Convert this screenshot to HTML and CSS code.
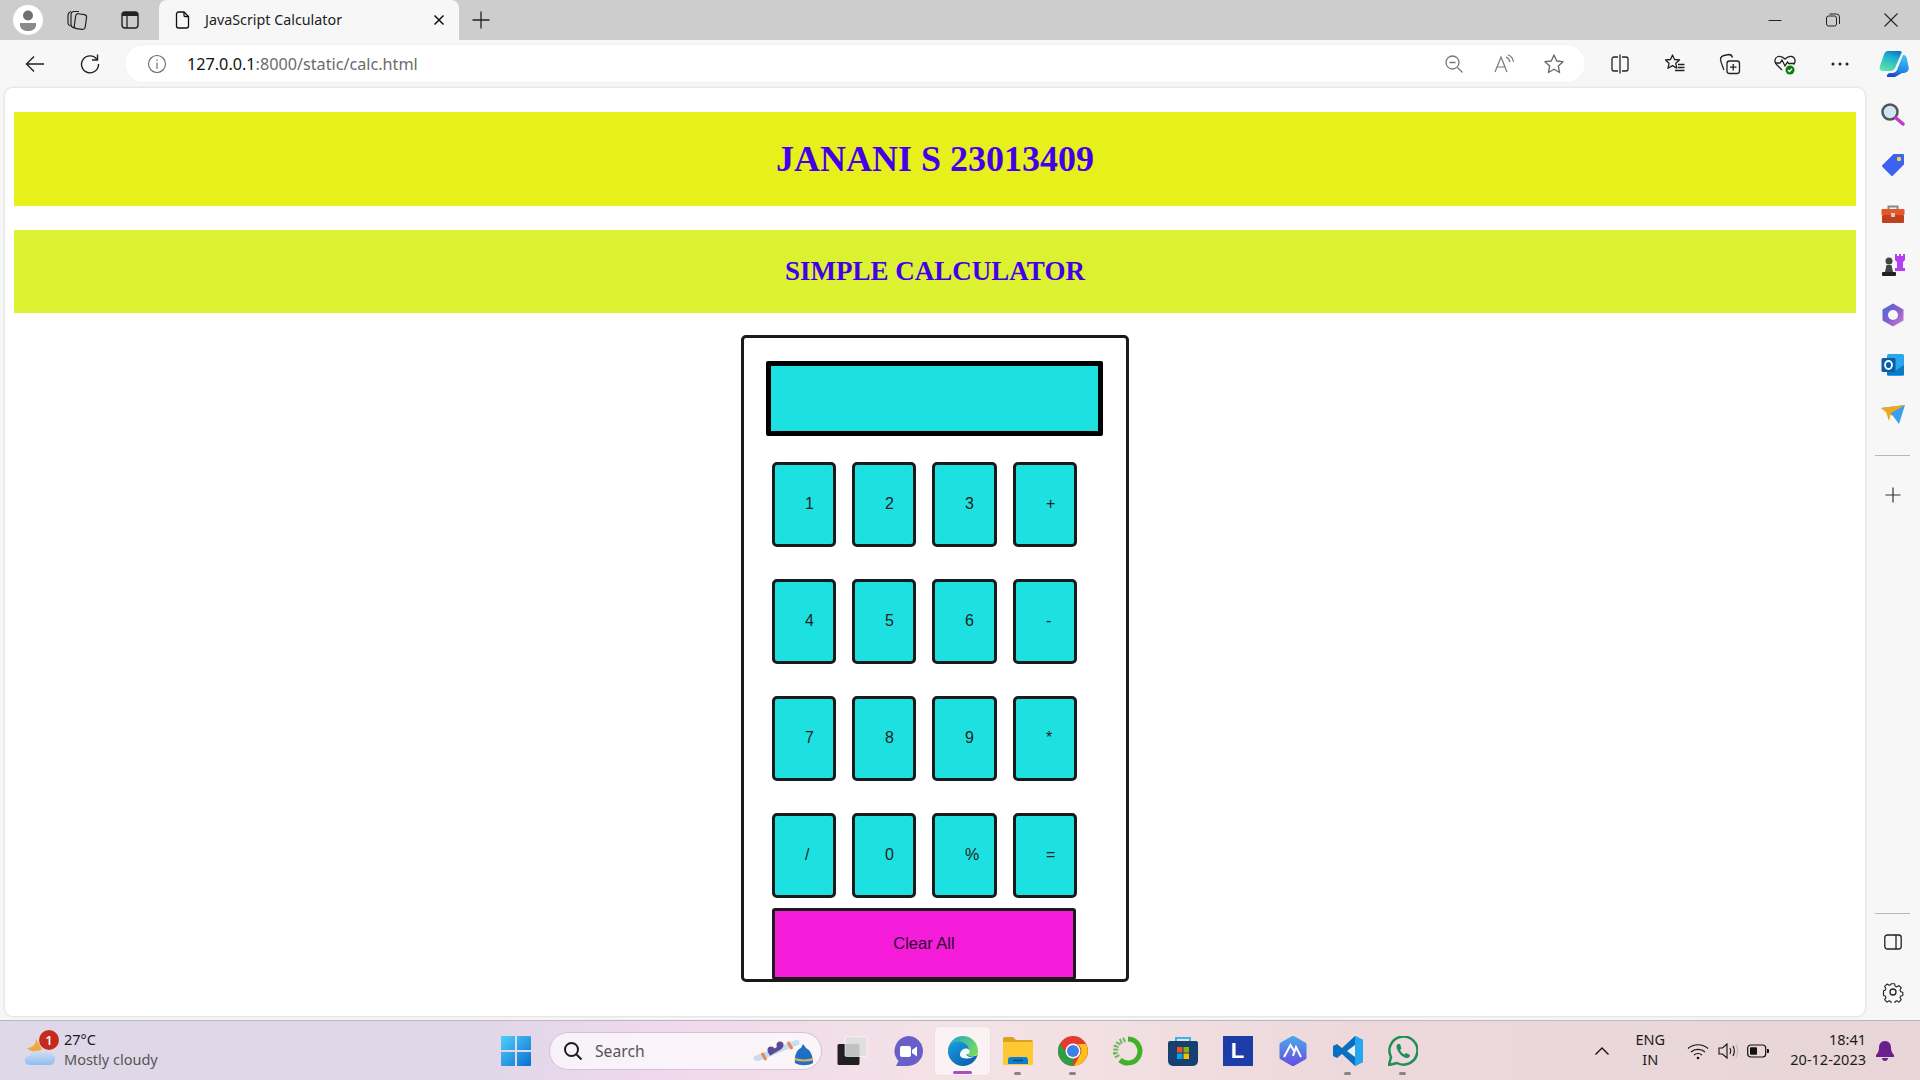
FILE: index.html
```html
<!DOCTYPE html>
<html lang="en">
<head>
  <meta charset="UTF-8" />
  <title>JavaScript Calculator</title>
  <link rel="stylesheet" href="styles.css">
</head>
<body>

  <div class="tabstrip">
    <div class="strip-btn">
      <span class="avatar">
        <svg width="30" height="30" viewBox="0 0 30 30"><circle cx="15" cy="15" r="15" fill="#fff"/><circle cx="15" cy="10.5" r="5" fill="#707070"/><path d="M7 18h16v2c0 4-4 6-8 6s-8-2-8-6z" fill="#8a8a8a"/></svg>
      </span>
    </div>
    <div class="strip-btn">
      <svg width="24" height="24" viewBox="0 0 24 24" fill="none" stroke="#222" stroke-width="1.200"><rect x="10" y="6" width="11" height="15" rx="2.500" transform="rotate(8 15 13)"/><path d="M9 20c-1.500-.5-3-1.500-3-3.500V7c0-2 1-3.500 3-3.500h5"/><path d="M5.500 18c-1.500-.5-2.500-1.500-2.500-3V8c0-2 1-4 3-4.500"/></svg>
    </div>
    <div class="strip-btn strip-btn-last">
      <svg width="20" height="20" viewBox="0 0 20 20"><rect x="2" y="2" width="16" height="16" rx="3" fill="none" stroke="#222" stroke-width="1.400"/><path d="M2 6V5a3 3 0 0 1 3-3h10a3 3 0 0 1 3 3v1z" fill="#222"/><path d="M7 6v12" stroke="#222" stroke-width="1.300"/></svg>
    </div>
    <div class="tab">
      <svg class="tab-icon" width="20" height="20" viewBox="0 0 20 20" fill="none" stroke="#111" stroke-width="1.300"><path d="M5.500 2h5.500l4.500 4.500V16a2 2 0 0 1-2 2h-8a2 2 0 0 1-2-2V4a2 2 0 0 1 2-2z"/><path d="M11 2v3.500a1 1 0 0 0 1 1h3.500"/></svg>
      <span class="tab-title">JavaScript Calculator</span>
      <svg class="tab-close" width="20" height="20" viewBox="0 0 20 20" stroke="#111" stroke-width="1.500"><path d="M5.500 5.500l9 9M14.500 5.500l-9 9"/></svg>
    </div>
    <svg class="tab-new" width="20" height="20" viewBox="0 0 20 20" stroke="#222" stroke-width="1.300"><path d="M10 1.500v17M1.500 10h17"/></svg>
    <div class="win-controls">
      <div class="win-btn"><svg width="14" height="14" viewBox="0 0 14 14" stroke="#222"><path d="M0.500 7.500h13"/></svg></div>
      <div class="win-btn"><svg width="14" height="14" viewBox="0 0 14 14" fill="none" stroke="#222"><rect x="0.500" y="3" width="10" height="10" rx="2"/><path d="M3.500 1h7a3 3 0 0 1 3 3v7"/></svg></div>
      <div class="win-btn"><svg width="14" height="14" viewBox="0 0 14 14" stroke="#222" stroke-width="1.100"><path d="M0.500 0.500l13 13M13.500 0.500l-13 13"/></svg></div>
    </div>
  </div>

  <div class="toolbar">
    <div class="nav-btn">
      <svg width="22" height="22" viewBox="0 0 22 22" fill="none" stroke="#222" stroke-width="1.400"><path d="M20 11H2.500M10 3.500 2.500 11l7.500 7.500"/></svg>
    </div>
    <div class="nav-btn">
      <svg width="22" height="22" viewBox="0 0 22 22" fill="none" stroke="#222" stroke-width="1.400"><path d="M18 6.500A8.500 8.500 0 1 0 19.500 11"/><path d="M18.500 1.500v5.500H13"/></svg>
    </div>
    <div class="address">
      <svg class="addr-info" width="20" height="20" viewBox="0 0 20 20" fill="none" stroke="#666" stroke-width="1.100"><circle cx="10" cy="10" r="8.500"/><path d="M10 8.500V15M10 5.500v1.500"/></svg>
      <span class="url"><span class="url-host">127.0.0.1</span>:8000/static/calc.html</span>
      <div class="addr-tools">
        <div class="addr-btn"><svg width="20" height="20" viewBox="0 0 20 20" fill="none" stroke="#777" stroke-width="1.300"><circle cx="8.500" cy="8.500" r="6.500"/><path d="M5.500 8.500h6M13.500 13.500l5 5"/></svg></div>
        <div class="addr-btn"><svg width="22" height="20" viewBox="0 0 22 20" fill="none" stroke="#777" stroke-width="1.200"><path d="M2 18 8 3l6 15M4 13h8"/><path d="M13 3c2.500 1 3.500 3 4 5M15 .8c3 1.200 5 4 5.500 7"/></svg></div>
        <div class="addr-btn"><svg width="22" height="22" viewBox="0 0 22 22" fill="none" stroke="#666" stroke-width="1.300"><path d="M11 2l2.700 6 6.300.7-4.700 4.300 1.300 6.500L11 16.200 5.400 19.500 6.700 13 2 8.700 8.300 8z" stroke-linejoin="round"/></svg></div>
      </div>
    </div>
    <div class="tools">
      <div class="tool"><svg width="20" height="20" viewBox="0 0 20 20" fill="none" stroke="#222" stroke-width="1.300"><path d="M8 3H4a2 2 0 0 0-2 2v10a2 2 0 0 0 2 2h4M12 3h4a2 2 0 0 1 2 2v10a2 2 0 0 1-2 2h-4M10 0.500v19"/></svg></div>
      <div class="tool"><svg width="22" height="22" viewBox="0 0 22 22" fill="none" stroke="#222" stroke-width="1.300"><path d="M8.500 2l2 4.500 5 .5-3.700 3.300 1 4.800-4.300-2.500-4.500 2.700 1-5L1.500 7l5-.5z" stroke-linejoin="round"/><path d="M14 11.500h6.500M14 14.500h6.500M11 17.500h9.500"/></svg></div>
      <div class="tool"><svg width="22" height="22" viewBox="0 0 22 22" fill="none" stroke="#222" stroke-width="1.300"><rect x="8" y="8" width="12.500" height="12.500" rx="2.500"/><path d="M14.200 11v6.500M11 14.200h6.500"/><path d="M5 17C3.500 13 2 10 1.500 6.500 1.500 4 3 3 5 2.500L10 1.500c2 0 3 1 3.500 3"/></svg></div>
      <div class="tool"><svg width="24" height="24" viewBox="0 0 24 24" fill="none" stroke="#222" stroke-width="1.300"><path d="M9 18 3.500 12.500C1 10 1.500 5.500 5 4.500 7.500 3.800 10 5 12 7c2-2 4.500-3.200 7-2.500 3.500 1 4 5.500 1.500 8"/><path d="M2 11h5l2-3 3 6 2.500-4 1 1.500h6"/><circle cx="17" cy="18" r="4.500" fill="#107c10" stroke="none"/><path d="M15 18l1.500 1.500 2.500-2.800" stroke="#fff"/></svg></div>
      <div class="tool"><svg width="20" height="6" viewBox="0 0 20 6" fill="#222"><circle cx="3" cy="3" r="1.500"/><circle cx="10" cy="3" r="1.500"/><circle cx="17" cy="3" r="1.500"/></svg></div>
      <div class="tool">
        <svg width="30" height="28" viewBox="0 0 30 28">
          <defs>
            <linearGradient id="copA" x1="0.700" y1="0" x2="0.300" y2="1"><stop offset="0" stop-color="#1478c8"/><stop offset="0.350" stop-color="#1fb4cf"/><stop offset="1" stop-color="#5fe3a6"/></linearGradient>
            <linearGradient id="copB" x1="0.600" y1="0" x2="0.400" y2="1"><stop offset="0" stop-color="#3fc4f5"/><stop offset="0.700" stop-color="#1f86e8"/><stop offset="1" stop-color="#2440c8"/></linearGradient>
          </defs>
          <path d="M9 1h12c1.500 0 2 1 1.500 2L16 18c-1 2-2.500 3-4.500 3H4.500C1.500 21 0 19 .8 16.500L5 4.500C5.700 2.300 7 1 9 1z" fill="url(#copA)"/>
          <path d="M24 5h.5c1.700 0 2.700 1 3.200 2.500l2 10C30.200 20.500 28 23 25 23h-2l-7 4H9.500c-1.500 0-2-1-1.500-2l2-2h3c2.500 0 4-1 5-3l6-15z" fill="url(#copB)"/>
        </svg>
      </div>
    </div>
  </div>

  <div class="main">
    <div class="viewport">
      <h1 class="banner banner-one">JANANI S 23013409</h1>
      <h2 class="banner banner-two">SIMPLE CALCULATOR</h2>

      <div class="calc">
        <div class="screen"></div>
        <div class="keys">
          <button class="key">1</button>
          <button class="key">2</button>
          <button class="key">3</button>
          <button class="key">+</button>
          <button class="key">4</button>
          <button class="key">5</button>
          <button class="key">6</button>
          <button class="key">-</button>
          <button class="key">7</button>
          <button class="key">8</button>
          <button class="key">9</button>
          <button class="key">*</button>
          <button class="key">/</button>
          <button class="key">0</button>
          <button class="key">%</button>
          <button class="key">=</button>
        </div>
        <button class="clear">Clear All</button>
      </div>
    </div>

    <div class="sidebar">
      <div class="side-icons">
        <svg class="side-icon" width="26" height="26" viewBox="0 0 26 26"><circle cx="10" cy="10" r="7.500" fill="#cfe6f5" stroke="#555" stroke-width="2.500"/><path d="M16 16l7 6" stroke="#c13ad0" stroke-width="3.500" stroke-linecap="round"/></svg>
        <svg class="side-icon" width="26" height="26" viewBox="0 0 26 26"><path d="M14 3h9v9L12 23 3 14z" fill="#3c62f0" stroke="#3c62f0" stroke-width="2" stroke-linejoin="round"/><circle cx="19" cy="7" r="2.200" fill="#f5d33c"/></svg>
        <svg class="side-icon" width="26" height="26" viewBox="0 0 26 26"><path d="M8.500 8V4.500h9V8" fill="none" stroke="#888" stroke-width="2"/><rect x="1.500" y="7" width="23" height="6" rx="1" fill="#e5562a"/><rect x="2" y="13" width="22" height="8" rx="1" fill="#c0401b"/><rect x="11" y="11" width="4" height="4" fill="#ccc"/></svg>
        <svg class="side-icon" width="26" height="26" viewBox="0 0 26 26"><path d="M15 2h2v2h2V2h2v2h2V2h2v6l-2 2v6h2v3h-10v-3h2v-6l-2-2z" fill="#b53ef0"/><circle cx="9" cy="9" r="3.500" fill="#444"/><path d="M6.500 13h5l1.500 7h-8z" fill="#444"/><rect x="2" y="20" width="14" height="4" rx="1" fill="#222"/></svg>
        <svg class="side-icon" width="26" height="26" viewBox="0 0 26 26">
          <defs><linearGradient id="msA" x1="0" y1="0" x2="1" y2="1"><stop offset="0" stop-color="#3a6fd8"/><stop offset="0.500" stop-color="#8a5cd0"/><stop offset="1" stop-color="#c77fd8"/></linearGradient></defs>
          <path d="M13 1.500 23.500 7.500v11L13 24.500 2.500 18.500v-11z" fill="url(#msA)"/><circle cx="13" cy="13" r="5" fill="#f7f7f7"/>
        </svg>
        <svg class="side-icon" width="26" height="26" viewBox="0 0 26 26"><rect x="7" y="2" width="17" height="22" rx="1.500" fill="#28a8ea"/><path d="M24 13l-9 6-8-6v10h17z" fill="#0f78c5"/><rect x="1.500" y="6" width="14" height="14" rx="1.500" fill="#0a5da8"/><ellipse cx="8.500" cy="13" rx="3.500" ry="4" fill="none" stroke="#fff" stroke-width="1.800"/></svg>
        <svg class="side-icon" width="26" height="26" viewBox="0 0 26 26"><path d="M1 6l24-3-6 19-6-8z" fill="#3aa0ee"/><path d="M1 6l24-3L11 11l-2 8-3-9z" fill="#f0a818"/><path d="M25 3 13 14l-2 5 2-5z" fill="#1e6fd0"/></svg>
      </div>
      <div class="side-rule"></div>
      <svg class="side-plus" width="16" height="16" viewBox="0 0 16 16" stroke="#333" stroke-width="1.200"><path d="M8 0.500v15M0.500 8h15"/></svg>
      <div class="side-bottom">
        <div class="side-rule"></div>
        <svg class="side-panel" width="18" height="16" viewBox="0 0 18 16" fill="none" stroke="#222" stroke-width="1.300"><rect x="0.800" y="1" width="16.400" height="14" rx="2.500"/><path d="M12 1v14"/></svg>
        <svg class="side-gear" width="22" height="22" viewBox="0 0 22 22" fill="none" stroke="#222" stroke-width="1.300"><path d="M9 1.500h4l.6 2.800 1.900.8 2.400-1.500 2.800 2.800-1.500 2.400.8 1.900 2.500.6v3.800l-2.500.6-.8 1.900 1.500 2.400-2.800 2.800-2.400-1.500-1.900.8-.6 2.300H9l-.6-2.300-1.900-.8-2.400 1.500-2.800-2.800 1.500-2.400-.8-1.900-2-.6V9.500l2-.6.8-1.900-1.500-2.400 2.800-2.800 2.400 1.500 1.900-.8z" transform="translate(1.500 1.500) scale(.86)" stroke-linejoin="round"/><circle cx="11" cy="11" r="3"/></svg>
      </div>
    </div>
  </div>

  <div class="taskbar">
    <div class="weather">
      <span class="weather-icon">
        <svg width="32" height="36" viewBox="0 0 32 36">
          <defs><linearGradient id="cloudA" x1="0" y1="0" x2="0" y2="1"><stop offset="0" stop-color="#cfe0f5"/><stop offset="1" stop-color="#8fbdee"/></linearGradient></defs>
          <path d="M12 6c0 6-4 9-9 9 3 4 10 5 15 1z" fill="#f2a93b"/>
          <path d="M6 32c-7 0-7-9 0-9 1-5 10-7 13-3 6-2 12 1 12 6 0 4-3 6-6 6z" fill="url(#cloudA)"/>
        </svg>
        <span class="weather-badge">1</span>
      </span>
      <div class="weather-text">
        <div class="temp">27°C</div>
        <div class="sky">Mostly cloudy</div>
      </div>
    </div>

    <svg class="start" width="30" height="30" viewBox="0 0 30 30">
      <defs><linearGradient id="winA" x1="0" y1="0" x2="1" y2="1"><stop offset="0" stop-color="#4fd0fb"/><stop offset="1" stop-color="#0a70cf"/></linearGradient></defs>
      <path d="M1 0h13v14H0V1a1 1 0 0 1 1-1zM16 0h13a1 1 0 0 1 1 1v13H16zM0 16h14v14H1a1 1 0 0 1-1-1zM16 16h14v13a1 1 0 0 1-1 1H16z" fill="url(#winA)"/>
    </svg>

    <div class="search">
      <svg width="22" height="22" viewBox="0 0 22 22" fill="none" stroke="#1c1c1c" stroke-width="2"><circle cx="9.500" cy="9.500" r="6.500"/><path d="M14 14l5.500 5.500"/></svg>
      <span class="search-label">Search</span>
      <svg class="search-art" width="62" height="32" viewBox="0 0 62 32">
        <path d="M2 21 43 5c3-1 5 3 2 5L6 26c-5 1-7-3-4-5z" fill="#c9dcef"/>
        <path d="M9 18l4 7M35 7l4 7" stroke="#e58b52" stroke-width="3"/>
        <circle cx="18" cy="15" r="3.500" fill="#5a4b96"/><circle cx="27" cy="10" r="3.500" fill="#5a4b96"/><path d="M16 19l12-7" stroke="#5a4b96" stroke-width="4"/>
        <path d="M42 28c-1-9 3-14 6-15l2-4 3 4c4 2 7 7 7 15-5 3-13 3-18 0z" fill="#1f6fc4"/>
        <path d="M42 24c5 2 13 2 18 0" stroke="#e3b355" stroke-width="2" fill="none"/>
      </svg>
    </div>

    <div class="apps">
      <div class="app">
        <svg width="32" height="30" viewBox="0 0 32 30"><rect x="0.500" y="8" width="22" height="21" rx="1.500" fill="#202020"/><rect x="8" y="0.500" width="22" height="20" rx="1.500" fill="#dedede" fill-opacity=".85" stroke="#fff" stroke-opacity=".6"/></svg>
      </div>
      <div class="app">
        <svg width="30" height="30" viewBox="0 0 30 30"><path d="M15 0a15 15 0 0 1 0 30H3l2.500-5A15 15 0 0 1 15 0z" fill="#6a5fc8"/><rect x="7" y="10" width="11" height="11" rx="2" fill="#fff"/><path d="M19 14l5-3.500v10L19 17z" fill="#fff"/></svg>
      </div>
      <div class="app app-active">
        <svg width="32" height="32" viewBox="0 0 32 32">
          <defs>
            <linearGradient id="edgeA" x1="0" y1="0" x2="1" y2="0.600"><stop offset="0" stop-color="#1a9fd0"/><stop offset="1" stop-color="#7ee05a"/></linearGradient>
            <linearGradient id="edgeB" x1="0" y1="0" x2="0.800" y2="1"><stop offset="0" stop-color="#1aa0e0"/><stop offset="1" stop-color="#0a5cb0"/></linearGradient>
          </defs>
          <circle cx="16" cy="16" r="15" fill="url(#edgeA)"/>
          <path d="M1 16C1 9 8 6 14 7c5 1 8 4.500 8 8 0 2-1 3-3 3.500 2 3 7 4 11.500 1.500C28.500 27 22 31 16 31 8 31 1 24 1 16z" fill="url(#edgeB)"/>
          <path d="M13 20c0-4 3-6.500 6-6.500 2.500 0 4 1.500 3.500 4-.4 1.500-2 2-3.500 1.500 1 3 6 5 11-.5-1 1.500-5 5-9.500 5-4.500 0-7.500-1-7.500-3.500z" fill="#f4fafa"/>
        </svg>
        <span class="app-bar"></span>
      </div>
      <div class="app">
        <svg width="30" height="28" viewBox="0 0 30 28"><path d="M0 2a2 2 0 0 1 2-2h8l3 3h15a2 2 0 0 1 2 2v3H0z" fill="#dda11d"/><rect y="5" width="30" height="23" rx="1" fill="#fcc933"/><path d="M5 27v-4a3 3 0 0 1 3-3h14a3 3 0 0 1 3 3v4z" fill="#0c7ed0"/><path d="M10 23.500h10" stroke="#0a3f78" stroke-width="1.500"/></svg>
        <span class="app-dot"></span>
      </div>
      <div class="app">
        <svg width="30" height="30" viewBox="0 0 30 30"><circle cx="15" cy="15" r="15" fill="#e33b2e"/><path d="M15 30A15 15 0 0 1 2 7.500L9 18a7 7 0 0 0 7 4z" fill="#2f9e44"/><path d="M15 8h13a15 15 0 0 1-12 22l6-11a7 7 0 0 0-7-11z" fill="#fbc31a"/><circle cx="15" cy="15" r="7.500" fill="#fff"/><circle cx="15" cy="15" r="6" fill="#3f7fe8"/></svg>
        <span class="app-dot"></span>
      </div>
      <div class="app">
        <svg width="30" height="30" viewBox="0 0 30 30" fill="none"><path d="M15 3a12 12 0 1 1-8 21" stroke="#43b02a" stroke-width="5"/><path d="M12 3.500 6 6 3 11l-.5 6 2.500 5" stroke="#6cb85c" stroke-width="5" stroke-dasharray="2 1.500"/></svg>
      </div>
      <div class="app">
        <svg width="30" height="30" viewBox="0 0 30 30"><path d="M8 5V2h14v3" fill="none" stroke="#36b5f0" stroke-width="2"/><path d="M0 7a2 2 0 0 1 2-2h26a2 2 0 0 1 2 2v18a5 5 0 0 1-5 5H5a5 5 0 0 1-5-5z" fill="#15406f"/><rect x="9" y="11" width="5.500" height="5.500" fill="#f25022"/><rect x="15.500" y="11" width="5.500" height="5.500" fill="#7fba00"/><rect x="9" y="17.500" width="5.500" height="5.500" fill="#00a4ef"/><rect x="15.500" y="17.500" width="5.500" height="5.500" fill="#ffb900"/></svg>
      </div>
      <div class="app">
        <span class="app-letter">L</span>
      </div>
      <div class="app">
        <svg width="28" height="30" viewBox="0 0 28 30">
          <defs><linearGradient id="hexA" x1="0" y1="0" x2="0" y2="1"><stop offset="0" stop-color="#4aa8ec"/><stop offset="1" stop-color="#6a4be0"/></linearGradient></defs>
          <path d="M14 0 27 7.500v15L14 30 1 22.500v-15z" fill="url(#hexA)" stroke="url(#hexA)" stroke-linejoin="round"/>
          <path d="M5 21 11.500 9l3.500 6M14 20l3-9 5 10" fill="none" stroke="#fff" stroke-width="2"/>
        </svg>
      </div>
      <div class="app">
        <svg width="30" height="30" viewBox="0 0 30 30"><path d="M22 0l8 4v22l-8 4-13-12-5 4-4-2V10l4-2 5 4z" fill="#0a6fc0"/><path d="M22 0l8 4v22l-8 4z" fill="#22a7f0"/><path d="M22 9l-8 6 8 6z" fill="#f2f0f0"/></svg>
        <span class="app-dot"></span>
      </div>
      <div class="app">
        <svg width="30" height="30" viewBox="0 0 30 30" fill="none"><path d="M1 29l2-8A14 14 0 1 1 9 27z" stroke="#1f8f56" stroke-width="2.500" stroke-linejoin="round"/><path d="M10 8c-2 1-2 4 0 7 2 4 6 7 9 7 2 0 3-2 3-3l-4-2-1.500 1.500c-2-1-3.500-2.500-4.500-4.500l1.500-1.500L12 8z" fill="#1f8f56"/></svg>
        <span class="app-dot"></span>
      </div>
    </div>

    <div class="tray">
      <svg class="tray-chevron" width="16" height="10" viewBox="0 0 16 10" fill="none" stroke="#111" stroke-width="1.400"><path d="M1.500 8.500 8 2l6.500 6.500"/></svg>
      <div class="lang">ENG<br>IN</div>
      <svg class="tray-wifi" width="22" height="18" viewBox="0 0 22 18" fill="none" stroke="#111" stroke-width="1.200"><path d="M1 6.500c5.500-5 14.500-5 20 0M4 10c3.800-3.500 10.200-3.500 14 0M7 13c2.200-2 5.800-2 8 0"/><circle cx="11" cy="16" r="1.300" fill="#111" stroke="none"/></svg>
      <svg class="tray-sound" width="22" height="18" viewBox="0 0 22 18" fill="none" stroke="#111" stroke-width="1.100"><path d="M1 6h3.500L9 2v14l-4.500-4H1z"/><path d="M12 6c1 2 1 4 0 6M15 4c1.600 3 1.600 7 0 10"/><path d="M18 2.500c2 4 2 9 0 13" stroke="#bbb"/></svg>
      <svg class="tray-battery" width="22" height="14" viewBox="0 0 22 14"><rect x="0.700" y="1" width="18" height="12" rx="3" fill="none" stroke="#111" stroke-width="1.200"/><rect x="3" y="3.300" width="7" height="7.400" rx="1" fill="#111"/><path d="M20 5h1a1 1 0 0 1 1 1v2a1 1 0 0 1-1 1h-1z" fill="#111"/></svg>
      <div class="clock">
        <div>18:41</div>
        <div>20-12-2023</div>
      </div>
      <svg class="tray-bell" width="18" height="20" viewBox="0 0 18 20"><path d="M9 0c4 0 6 3 6 6.500 0 3 1 5.500 3 7.500v2H0v-2c2-2 3-4.500 3-7.500C3 3 5 0 9 0z" fill="#6b1f8c"/><path d="M6 17h6c0 2-1.500 3-3 3s-3-1-3-3z" fill="#6b1f8c"/></svg>
    </div>
  </div>

</body>
</html>
```

FILE: styles.css
```css
* {
  box-sizing: border-box;
}
html, body {
  margin: 0;
  height: 100%;
}
body {
  width: 1920px;
  height: 1080px;
  overflow: hidden;
  background-color: #f7f7f7;
  font-family: "Open Sans", "Noto Sans", sans-serif;
  display: flex;
  flex-direction: column;
}

/* tab strip */
.tabstrip {
  height: 40px;
  background-color: #cdcdcd;
  display: flex;
  align-items: center;
  gap: 9px;
  padding-left: 8px;
}
.strip-btn {
  width: 40px;
  height: 40px;
  display: flex;
  align-items: center;
  justify-content: center;
}
.strip-btn-last {
  margin-left: 4px;
}
.avatar {
  display: flex;
}
.tab {
  width: 300px;
  height: 40px;
  background-color: #f7f7f7;
  border-radius: 8px 8px 0 0;
  display: flex;
  align-items: center;
  padding-left: 14px;
  padding-right: 10px;
}
.tab-title {
  flex: 1;
  margin-left: 12px;
  padding-bottom: 2px;
  font-size: 14.300px;
  color: #222;
  font-family: "Noto Sans", sans-serif;
}
.tab-new {
  margin-left: 3px;
}
.win-controls {
  margin-left: auto;
  display: flex;
}
.win-btn {
  width: 58px;
  height: 40px;
  display: flex;
  align-items: center;
  justify-content: center;
}

/* toolbar */
.toolbar {
  height: 48px;
  display: flex;
  align-items: center;
  gap: 15px;
  padding-left: 15px;
  padding-bottom: 1px;
}
.nav-btn {
  width: 40px;
  height: 37px;
  display: flex;
  align-items: center;
  justify-content: center;
}
.address {
  width: 1460px;
  height: 37px;
  background-color: #fff;
  border-radius: 18px;
  display: flex;
  align-items: center;
  padding-left: 22px;
  padding-right: 6px;
  box-shadow: 0 0 2px rgba(0, 0, 0, 0.08);
}
.url {
  margin-left: 20px;
  font-size: 16.200px;
  color: #6b6b6b;
  font-family: "Noto Sans", sans-serif;
}
.url-host {
  color: #111;
}
.addr-tools {
  margin-left: auto;
  display: flex;
}
.addr-btn {
  width: 50px;
  display: flex;
  align-items: center;
  justify-content: center;
}
.tools {
  margin-left: -8px;
  flex: 1;
  display: flex;
  align-items: center;
}
.tool {
  width: 55px;
  display: flex;
  align-items: center;
  justify-content: center;
}
.tool:last-child {
  flex: 1;
  width: auto;
}

/* page area */
.main {
  flex: 1;
  display: flex;
  min-height: 0;
}
.viewport {
  width: 1860px;
  height: 928px;
  margin-left: 5px;
  padding: 24px 9px 0;
  background-color: #fff;
  border-radius: 8px;
  box-shadow: 0 0 3px rgba(0, 0, 0, 0.18);
}
.banner {
  margin: 0;
  display: flex;
  align-items: center;
  justify-content: center;
  color: #4300e8;
  font-family: "Liberation Serif", serif;
  font-weight: bold;
}
.banner-one {
  height: 94px;
  background-color: #e8f01c;
  font-size: 36px;
}
.banner-two {
  height: 83px;
  margin-top: 24px;
  padding-bottom: 1px;
  background-color: #dcf132;
  font-size: 27px;
}

/* calculator */
.calc {
  width: 388px;
  height: 647px;
  margin: 22px auto 0;
  padding-top: 23px;
  border: 3px solid #1a1a1a;
  border-radius: 5px;
}
.screen {
  width: 337px;
  height: 75px;
  margin-left: 22px;
  background-color: #1de1e1;
  border: 5px solid #000;
  border-radius: 2px;
}
.keys {
  display: grid;
  grid-template-columns: 64px 64px 65px 64px;
  grid-auto-rows: 85px;
  gap: 32px 16px;
  margin: 26px 0 0 28px;
}
.key {
  padding: 0 0 2px 30px;
  text-align: left;
  font-family: "Liberation Sans", Arial, sans-serif;
  font-size: 16px;
  color: #222;
  background-color: #1de1e1;
  border: 3px solid #1a1a1a;
  border-radius: 5px;
}
.clear {
  display: block;
  width: 304px;
  height: 72px;
  margin: 10px 0 0 28px;
  padding: 0 0 2px;
  font-family: "Liberation Sans", Arial, sans-serif;
  font-size: 16.500px;
  color: #2a0a30;
  background-color: #f51dd9;
  border: 3px solid #1a1a1a;
  border-radius: 3px;
}

/* edge sidebar */
.sidebar {
  flex: 1;
  display: flex;
  flex-direction: column;
  align-items: center;
  padding-top: 14px;
}
.side-icons {
  display: flex;
  flex-direction: column;
  align-items: center;
  gap: 24px;
}
.side-icon {
  display: block;
}
.side-rule {
  width: 35px;
  height: 1px;
  background-color: #b8b8b8;
}
.sidebar > .side-rule {
  margin-top: 27px;
}
.side-plus {
  margin-top: 31px;
}
.side-bottom {
  margin-top: auto;
  display: flex;
  flex-direction: column;
  align-items: center;
  padding-bottom: 17px;
}
.side-panel {
  margin-top: 20px;
}
.side-gear {
  margin-top: 31px;
}

/* taskbar */
.taskbar {
  height: 60px;
  position: relative;
  display: flex;
  align-items: center;
  border-top: 1px solid #bdb5bd;
  background: linear-gradient(90deg, #dfd8e8 0%, #e0d7e9 25%, #efd8ec 34%, #f4e3e6 50%, #edd9dc 70%, #e8d5d7 100%);
}
.weather {
  width: 519px;
  display: flex;
  align-items: center;
  padding-left: 24px;
}
.weather-icon {
  position: relative;
  width: 32px;
  height: 36px;
  display: block;
}
.weather-badge {
  position: absolute;
  top: -3px;
  left: 15px;
  width: 20px;
  height: 20px;
  border-radius: 50%;
  background-color: #c42b1c;
  color: #fff;
  font-size: 13px;
  font-weight: 600;
  line-height: 20px;
  text-align: center;
}
.weather-text {
  margin-left: 8px;
  padding-bottom: 4px;
  line-height: 20px;
  font-size: 14.500px;
  font-family: "Noto Sans", sans-serif;
}
.temp {
  color: #1c1c1c;
}
.sky {
  color: #555;
}
.start {
  margin-left: -18px;
  flex: none;
}
.search {
  width: 273px;
  height: 38px;
  margin-left: 18px;
  padding-left: 12px;
  display: flex;
  align-items: center;
  background-color: rgba(255, 255, 255, 0.68);
  border: 1px solid #d3c3d8;
  border-radius: 19px;
}
.search-label {
  margin-left: 11px;
  font-size: 15.700px;
  color: #555;
  font-family: "Noto Sans", sans-serif;
}
.search-art {
  margin-left: auto;
  margin-right: 6px;
}
.apps {
  display: flex;
  margin-left: 3px;
}
.app {
  width: 55px;
  height: 48px;
  position: relative;
  display: flex;
  align-items: center;
  justify-content: center;
}
.app-active {
  background-color: rgba(255, 255, 255, 0.55);
  border-radius: 4px;
  box-shadow: 0 0 1px rgba(0, 0, 0, 0.2);
}
.app-bar {
  position: absolute;
  bottom: 1px;
  left: 18px;
  width: 19px;
  height: 3px;
  border-radius: 2px;
  background-color: #a94fc4;
}
.app-dot {
  position: absolute;
  bottom: 0;
  left: 24px;
  width: 7px;
  height: 3px;
  border-radius: 2px;
  background-color: #868686;
}
.app-letter {
  width: 30px;
  height: 30px;
  background-color: #1c3ca8;
  color: #fff;
  font-family: "Liberation Sans", Arial, sans-serif;
  font-weight: bold;
  font-size: 22px;
  line-height: 30px;
  text-align: center;
}
.tray {
  position: absolute;
  right: 0;
  top: 0;
  bottom: 0;
  display: flex;
  align-items: center;
  padding-right: 54px;
  font-family: "Noto Sans", sans-serif;
  color: #1c1c1c;
}
.lang {
  margin-left: 20px;
  width: 40px;
  padding-bottom: 3px;
  text-align: center;
  font-size: 14.500px;
  line-height: 20px;
}
.tray-wifi {
  margin-left: 17px;
}
.tray-sound {
  margin-left: 9px;
}
.tray-battery {
  margin-left: 7px;
}
.clock {
  margin-left: 21px;
  padding-bottom: 4px;
  text-align: right;
  font-size: 14.500px;
  line-height: 20px;
}
.tray-bell {
  position: absolute;
  right: 26px;
}
```
